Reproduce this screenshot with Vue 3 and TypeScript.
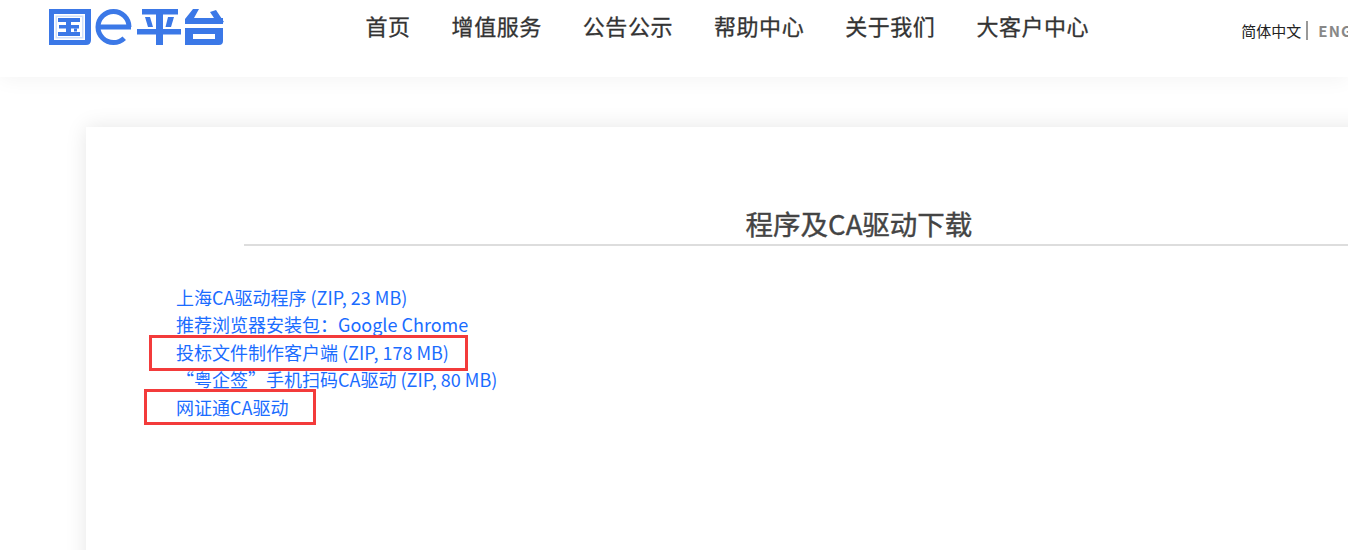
<script setup lang="ts">
const navItems = ['首页', '增值服务', '公告公示', '帮助中心', '关于我们', '大客户中心']

const downloads = [
  { label: '上海CA驱动程序 (ZIP, 23 MB)' },
  { label: '推荐浏览器安装包：Google Chrome' },
  { label: '投标文件制作客户端 (ZIP, 178 MB)', mark: 'mark-a' },
  { label: '“粤企签”手机扫码CA驱动 (ZIP, 80 MB)' },
  { label: '网证通CA驱动', mark: 'mark-b' }
]
</script>

<template>
  <div class="page">
    <header class="header">
      <svg class="logo" width="175" height="36" viewBox="49 9 175 36" fill="#3b78e7" role="img" aria-label="国e平台">
        <!-- 国 -->
        <path d="M49 9h42v31q0 5-5 5H49z" />
        <rect x="54" y="14" width="31" height="26" fill="#fff" />
        <rect x="55.500" y="15.500" width="28" height="23" fill="#cfe0fb" />
        <rect x="57" y="17" width="25" height="20" fill="#fff" />
        <rect x="58" y="18" width="22" height="4" />
        <rect x="59" y="25" width="20" height="3.500" />
        <rect x="58" y="32" width="22" height="4" />
        <rect x="66" y="18" width="5" height="18" />
        <rect x="74" y="28.500" width="3" height="3" />
        <!-- e -->
        <circle cx="113.500" cy="27" r="15.500" fill="none" stroke="#3b78e7" stroke-width="5" stroke-dasharray="85 12.400" stroke-dashoffset="-12.400" />
        <rect x="99" y="24.500" width="32" height="5" />
        <!-- 平 -->
        <rect x="142" y="9" width="36" height="5.500" />
        <rect x="137" y="29" width="44" height="5.500" />
        <rect x="156" y="9" width="7" height="36" />
        <polygon points="145,17 150,17 153,27 148,27" />
        <polygon points="168,17 174,17 171,27 165.500,27" />
        <!-- 台 -->
        <polygon points="193,9 199,9 194,18 223,18 223,24 185,24 185,19" />
        <polygon points="210,12 216,10 224,22 218,24" />
        <path fill-rule="evenodd" d="M185 28h38v13q0 4-4 4h-34zM193 34v5h22v-5z" />
      </svg>

      <nav class="nav">
        <a v-for="item in navItems" :key="item" class="nav-item">{{ item }}</a>
      </nav>

      <div class="lang">
        <span class="lang-cn">简体中文</span>
        <span class="lang-sep"></span>
        <span class="lang-en">ENGLISH</span>
      </div>
    </header>

    <main class="card">
      <div class="title-row">
        <h2 class="title">程序及CA驱动下载</h2>
      </div>
      <ul class="list">
        <li v-for="d in downloads" :key="d.label">
          <a class="link">{{ d.label }}</a>
          <span v-if="d.mark" class="mark" :class="d.mark"></span>
        </li>
      </ul>
    </main>
  </div>
</template>

<style>
html,
body {
  margin: 0;
  overflow: hidden;
  background: #fff;
}
</style>

<style scoped>
.page {
  width: 1348px;
  height: 550px;
  overflow: hidden;
  font-family: "Noto Sans CJK SC", "Noto Sans", sans-serif;
  background: #fff;
}

.header {
  position: relative;
  z-index: 1;
  display: flex;
  align-items: flex-start;
  height: 77px;
  padding: 9px 0 0 49px;
  box-sizing: border-box;
  background: #fff;
  box-shadow: 0 2px 20px rgba(0, 0, 0, 0.05);
  white-space: nowrap;
}

.logo {
  flex: none;
}

.nav {
  display: flex;
  flex: none;
  gap: 41px;
  margin-left: 141.500px;
  margin-top: -2px;
}

.nav-item {
  font-size: 22px;
  line-height: 36px;
  letter-spacing: 0.55px;
  color: #333;
  -webkit-text-stroke: 0.3px #333;
}

.lang {
  display: flex;
  flex: none;
  align-items: center;
  height: 20px;
  margin: 11px 0 0 152px;
  font-size: 15px;
}

.lang-cn {
  color: #222;
}

.lang-sep {
  width: 2px;
  height: 19px;
  margin: 0 10px 0 5px;
  background: #999;
}

.lang-en {
  font-weight: 700;
  letter-spacing: 1.200px;
  color: #888;
}

.card {
  width: 1600px;
  height: 600px;
  margin: 50px 0 0 86px;
  padding-top: 77px;
  box-sizing: border-box;
  background: #fff;
  box-shadow: 0 0 20px rgba(0, 0, 0, 0.1);
}

.title-row {
  width: 1230px;
  margin-left: 158px;
  padding-bottom: 2px;
  border-bottom: 2px solid #ddd;
}

.title {
  margin: 0;
  font-size: 27.500px;
  font-weight: 400;
  line-height: 38px;
  text-align: center;
  color: #444;
  -webkit-text-stroke: 0.4px #444;
}

.list {
  margin: 37.600px 0 0;
  padding: 0 0 0 90px;
  list-style: none;
  font-size: 18px;
  line-height: 27.600px;
}

.list li {
  position: relative;
}

.link {
  color: #1a6cff;
}

.mark {
  position: absolute;
  border: 3px solid #f33b3b;
  box-sizing: border-box;
  pointer-events: none;
}

.mark-a {
  left: -27px;
  top: -4px;
  width: 319px;
  height: 36px;
}

.mark-b {
  left: -32px;
  top: -5px;
  width: 172px;
  height: 36px;
}
</style>
